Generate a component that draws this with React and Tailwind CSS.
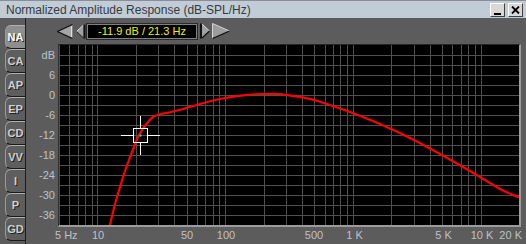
import React from "react";

const PX0 = 59, PY0 = 45, W = 460, H = 180, D = 127.7;
const fx = (f) => D * Math.log10(f / 5);

const gridX = [6, 7, 8, 9, 10, 20, 30, 40, 50, 60, 70, 80, 90, 100, 200, 300, 400, 500, 600, 700, 800, 900, 1000, 2000, 3000, 4000, 5000, 6000, 7000, 8000, 9000, 10000].map((f) => Math.round(fx(f)) + 0.5);
const gridY = [];
for (let y = 10; y < H; y += 10) gridY.push(y + 0.5);

const ptsAbs = [
  [109.5, 227], [113, 212], [117, 197], [121, 184], [125, 171], [130, 157.5], [136.7, 140], [140, 133.5],
  [143.3, 128], [148.3, 121.7], [153.3, 116.7], [160, 114.3], [170, 112.3], [180, 109.8],
  [200, 104], [220, 99], [243, 95.3], [263, 94], [280, 94], [292, 95.8], [307, 98.3], [320, 101.7],
  [350, 112], [380, 124], [410, 138], [440, 154], [470, 171], [502, 190], [521, 198],
];
const pts = ptsAbs.map(([x, y]) => [x - PX0, y - PY0]);

function catmull(p) {
  let d = `M ${p[0][0]} ${p[0][1]}`;
  for (let i = 0; i < p.length - 1; i++) {
    const p0 = p[i - 1] || p[i];
    const p1 = p[i];
    const p2 = p[i + 1];
    const p3 = p[i + 2] || p2;
    const c1x = p1[0] + (p2[0] - p0[0]) / 6;
    const c1y = p1[1] + (p2[1] - p0[1]) / 6;
    const c2x = p2[0] - (p3[0] - p1[0]) / 6;
    const c2y = p2[1] - (p3[1] - p1[1]) / 6;
    d += ` C ${c1x.toFixed(2)} ${c1y.toFixed(2)} ${c2x.toFixed(2)} ${c2y.toFixed(2)} ${p2[0]} ${p2[1]}`;
  }
  return d;
}

const tabs = ["NA", "CA", "AP", "EP", "CD", "VV", "I", "P", "GD"];
const yLabels = ["dB", "6", "0", "-6", "-12", "-18", "-24", "-30", "-36"];
const xLabels = [
  { t: "5 Hz", x: 55, a: "left" },
  { t: "10", x: 98 },
  { t: "50", x: 187 },
  { t: "100", x: 226 },
  { t: "500", x: 314 },
  { t: "1 K", x: 354.5 },
  { t: "5 K", x: 443.5 },
  { t: "10 K", x: 482 },
  { t: "20 K", x: 522, a: "right" },
];

function Plot() {
  return (
    <svg width={W} height={H} className="block">
      <rect x="0" y="0" width={W} height={H} fill="#000" />
      {gridX.map((x) => (
        <line key={"v" + x} x1={x} y1="0" x2={x} y2={H} stroke="#505050" strokeWidth="1" />
      ))}
      {gridY.map((y) => (
        <line key={"h" + y} x1="0" y1={y} x2={W} y2={y} stroke="#505050" strokeWidth="1" />
      ))}
      <line x1="0.5" y1="0" x2="0.5" y2={H} stroke="#505050" />
      <path d={catmull(pts)} fill="none" stroke="#ff0000" strokeWidth="2.2" />
      <g stroke="#ffffff" strokeWidth="1" fill="none" shapeRendering="crispEdges">
        <line x1="62" y1="90.5" x2="74.5" y2="90.5" />
        <line x1="88.5" y1="90.5" x2="101" y2="90.5" />
        <line x1="81.5" y1="71" x2="81.5" y2="83.5" />
        <line x1="81.5" y1="97.5" x2="81.5" y2="110" />
        <rect x="74.5" y="83.5" width="14" height="14" strokeWidth="1.5" />
      </g>
      <rect x="80.5" y="89.5" width="2" height="2" fill="#00e0e0" />
    </svg>
  );
}

export default function App() {
  const font = "font-['Liberation_Sans',Arial,sans-serif]";
  return (
    <div className={`w-[526px] h-[244px] flex flex-col bg-[#5c5c5c] overflow-hidden ${font}`}>
      {/* Title bar */}
      <div className="h-[18px] flex items-center bg-[#c2ccd6] border-t border-[#8a8f96] pl-[6px] pr-[3px]">
        <div className="flex-1 text-[12px] leading-none text-[#343a42]">Normalized Amplitude Response (dB-SPL/Hz)</div>
        <div className="flex gap-[3px]">
          <div className="w-[15px] h-[14px] bg-[#d8d8d8] border border-t-white border-l-white border-r-[#404040] border-b-[#404040] flex items-end justify-center pb-[1px]">
            <div className="w-[7px] h-[2px] bg-black" />
          </div>
          <div className="w-[15px] h-[14px] bg-[#d8d8d8] border border-t-white border-l-white border-r-[#404040] border-b-[#404040] flex items-center justify-center">
            <svg width="9" height="8" viewBox="0 0 9 8">
              <path d="M1 0.5 L8 7.5 M8 0.5 L1 7.5" stroke="#000" strokeWidth="1.8" />
            </svg>
          </div>
        </div>
      </div>

      {/* Body */}
      <div className="flex-1 flex">
        {/* Tabs */}
        <div className="w-[26px] border-r border-[#1c1c1c] pt-[7px] pl-[5px] flex flex-col">
          {tabs.map((t, i) => (
            <div
              key={t}
              className={`h-[24px] w-[20px] rounded-l-[6px] border-l border-t border-b border-l-[#9a9a9a] border-t-[#b0b0b0] border-b-[#1a1a1a] flex items-center justify-center text-[11px] font-bold leading-none [text-shadow:1px_1px_0_#202020] ${
                i === 0 ? "bg-[#8e8e8e] text-white" : "bg-[#5e5e5e] text-[#d0d0d0]"
              }`}
            >
              {t}
            </div>
          ))}
        </div>

        {/* Main */}
        <div className="flex-1 flex flex-col">
          {/* Toolbar */}
          <div className="h-[26px] flex items-center pl-[31px]">
            <svg width="16" height="15" viewBox="0 0 16 15" className="block">
              <polygon points="0.5,7.5 15.5,0.5 15.5,14.5" fill="#a6a6a6" />
              <path d="M15.5 0.5 L0.5 7.5 L15.5 14.5" fill="none" stroke="#111" strokeWidth="1.2" />
              <path d="M14.5 2 L14.5 13" stroke="#e0e0e0" strokeWidth="1" />
            </svg>
            <svg width="10" height="15" viewBox="0 0 10 15" className="block ml-[3px]">
              <polygon points="0.5,7.5 7.5,1 7.5,14" fill="#a0a0a0" />
              <path d="M7.5 1 L0.5 7.5" stroke="#d8d8d8" strokeWidth="1" />
              <path d="M0.5 7.5 L7.5 14" stroke="#222" strokeWidth="1" />
              <rect x="7.5" y="0.5" width="2" height="14" fill="#111" />
            </svg>
            <div className="ml-[1px] w-[110px] h-[15px] bg-black border border-[#808080] outline outline-1 outline-[#2a2a2a] flex items-center justify-center text-[11px] leading-none text-[#f4f000]">
              -11.9 dB / 21.3 Hz
            </div>
            <svg width="10" height="16" viewBox="0 0 10 16" className="block ml-[3px]">
              <rect x="0" y="0.5" width="2" height="15" fill="#111" />
              <polygon points="2,1 9.5,8 2,15" fill="#a0a0a0" />
              <path d="M2 1 L9.5 8" stroke="#d8d8d8" strokeWidth="1" />
              <path d="M9.5 8 L2 15" stroke="#111" strokeWidth="1.2" />
            </svg>
            <svg width="18" height="16" viewBox="0 0 18 16" className="block ml-[2px]">
              <polygon points="0.5,0.5 17.5,8 0.5,15.5" fill="#9c9c9c" />
              <path d="M0.5 15.5 L0.5 0.5 L17.5 8" fill="none" stroke="#d4d4d4" strokeWidth="1" />
              <path d="M17.5 8 L0.5 15.5" stroke="#111" strokeWidth="1.3" />
            </svg>
          </div>

          {/* Plot row */}
          <div className="flex">
            <div className="w-[32px] pt-[1px] pr-[3px] flex flex-col">
              {yLabels.map((l) => (
                <div key={l} className="h-[20px] flex items-center justify-end text-[11px] leading-none text-[#bcc2ca]">
                  {l}
                </div>
              ))}
            </div>
            <div className="border-t border-l border-t-[#262626] border-l-[#303030] border-r-2 border-b-2 border-r-[#9c9c9c] border-b-[#9c9c9c]">
              <Plot />
            </div>
          </div>

          {/* X labels */}
          <div className="relative flex-1">
            {xLabels.map((l) => (
              <span
                key={l.t}
                className={`absolute top-0 h-full flex items-center text-[11px] leading-none text-[#bcc2ca] whitespace-nowrap ${
                  l.a === "left" ? "" : l.a === "right" ? "-translate-x-full" : "-translate-x-1/2"
                }`}
                style={{ left: l.x - 26 }}
              >
                {l.t}
              </span>
            ))}
          </div>
        </div>
      </div>
    </div>
  );
}
